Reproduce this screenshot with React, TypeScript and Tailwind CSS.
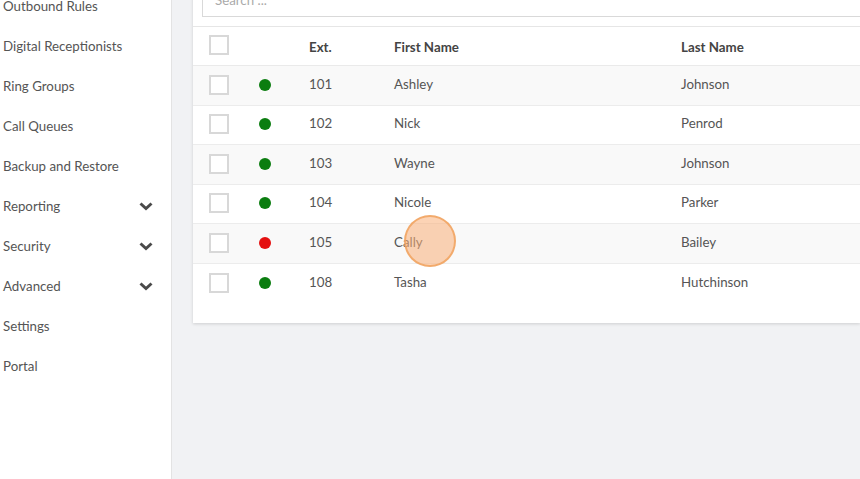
import React from "react";

const side = [
  { t: "Outbound Rules" },
  { t: "Digital Receptionists" },
  { t: "Ring Groups" },
  { t: "Call Queues" },
  { t: "Backup and Restore" },
  { t: "Reporting", c: true },
  { t: "Security", c: true },
  { t: "Advanced", c: true },
  { t: "Settings" },
  { t: "Portal" },
];

const rows = [
  { e: "101", f: "Ashley", l: "Johnson", on: true },
  { e: "102", f: "Nick", l: "Penrod", on: true },
  { e: "103", f: "Wayne", l: "Johnson", on: true },
  { e: "104", f: "Nicole", l: "Parker", on: true },
  { e: "105", f: "Cally", l: "Bailey", on: false },
  { e: "108", f: "Tasha", l: "Hutchinson", on: true },
];

function Chevron() {
  return (
    <svg width="14" height="10" viewBox="0 0 14 10" className="mr-[18px] -mt-[2px]">
      <path d="M1.5 2.5 L7 7.5 L12.5 2.5" fill="none" stroke="#4a4a4a" strokeWidth="3" strokeLinecap="butt" strokeLinejoin="miter" />
    </svg>
  );
}

const cols = "grid grid-cols-[57px_50px_85px_287px_1fr] items-center";

function Box() {
  return <div className="w-5 h-5 border-2 border-[#d8d8d8] bg-white" />;
}

export default function App() {
  return (
    <div
      className="relative flex w-[860px] h-[479px] overflow-hidden bg-[#f1f2f4] text-[13.3px] text-[#555]"
      style={{ fontFamily: "'Source Sans Pro', Lato, 'Noto Sans', sans-serif" }}
    >
      <aside className="w-[172px] shrink-0 bg-white border-r border-[#e3e3e3] h-full">
        <ul className="-mt-[13px]">
          {side.map((s) => (
            <li key={s.t} className="h-10 flex items-center justify-between pl-[3px] text-[#555]">
              <span>{s.t}</span>
              {s.c && <Chevron />}
            </li>
          ))}
        </ul>
      </aside>
      <main className="flex-1 pl-[21px]">
        <section className="-mt-[17px] bg-white shadow-[0_1px_3px_rgba(0,0,0,0.15)] pb-[20px]">
          <div className="pl-[9px] pt-0 pb-[9px]">
            <div className="h-[34px] border border-[#d9d9d9] border-r-0 flex items-center pl-3 pt-[1px] text-[#aaa]">
              Search ...
            </div>
          </div>
          <div className="border-t border-[#e6e6e6]">
            <div className={`${cols} h-[39px] font-bold text-[#444] border-b border-[#eaeaea]`}>
              <div className="pl-4 -mt-[2px]"><Box /></div>
              <div />
              <div className="pl-[9px] pt-[3px]">Ext.</div>
              <div className="pl-[9px] pt-[3px]">First Name</div>
              <div className="pl-[9px] pt-[3px]">Last Name</div>
            </div>
            {rows.map((r, i) => (
              <div
                key={r.e}
                className={`${cols} h-[39.5px] border-b border-[#ececec] last:border-b-0 ${i % 2 === 0 ? "bg-[#f9f9f9]" : "bg-white"}`}
              >
                <div className="pl-4 -mt-[1px]"><Box /></div>
                <div className="pl-[9px] -mt-[1px]">
                  <div className={`w-[12px] h-[12px] rounded-full ${r.on ? "bg-[#0b7d10]" : "bg-[#e41010]"}`} />
                </div>
                <div className="pl-[9px] -mt-[1px]">{r.e}</div>
                <div className="pl-[9px] -mt-[1px]">{r.f}</div>
                <div className="pl-[9px] -mt-[1px]">{r.l}</div>
              </div>
            ))}
          </div>
        </section>
      </main>
      <div className="absolute left-[404px] top-[215px] w-[52px] h-[52px] rounded-full bg-[rgba(250,175,120,0.55)] border-2 border-[rgba(240,160,90,0.8)] pointer-events-none" />
    </div>
  );
}
